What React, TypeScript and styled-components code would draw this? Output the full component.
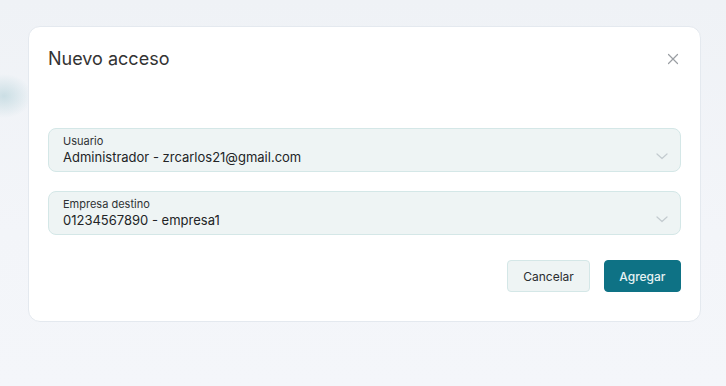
import { createGlobalStyle, styled } from "styled-components";

const GlobalStyle = createGlobalStyle`
  html, body {
    margin: 0;
    padding: 0;
  }
  body {
    background-color: #f1f4f8;
    font-family: "Inter", "Liberation Sans", sans-serif;
  }
`;

const Backdrop = styled.div`
  width: 726px;
  height: 386px;
  box-sizing: border-box;
  padding: 26px 25px 0 28px;
  background:
    radial-gradient(ellipse 28px 22px at 4px 96px, rgba(190, 215, 222, 0.75), rgba(190, 215, 222, 0) 100%),
    linear-gradient(180deg, #eff2f6 0%, #f3f5f9 60%, #f4f6fa 100%);
`;

const Modal = styled.div`
  width: 673px;
  height: 296px;
  box-sizing: border-box;
  padding: 20px 19px 0 19px;
  background-color: #ffffff;
  border: 1px solid #e4e9ef;
  border-radius: 12px;
  display: flex;
  flex-direction: column;
`;

const Header = styled.div`
  display: flex;
  align-items: center;
  justify-content: space-between;
  margin-bottom: 58px;
`;

const Title = styled.h2`
  margin: 0;
  font-size: 18px;
  line-height: 23px;
  font-weight: 400;
  color: #333333;
`;

const CloseButton = styled.button`
  display: flex;
  align-items: center;
  justify-content: center;
  width: 16px;
  height: 16px;
  padding: 0;
  border: none;
  background: transparent;
  cursor: pointer;
`;

const Fields = styled.div`
  display: flex;
  flex-direction: column;
  gap: 19px;
`;

const Field = styled.div`
  position: relative;
  height: 44px;
  box-sizing: border-box;
  padding: 5px 14px;
  background-color: #eef4f4;
  border: 1px solid #d4e7e7;
  border-radius: 8px;
`;

const Label = styled.div`
  font-size: 11px;
  line-height: 14px;
  color: #2f3235;
`;

const Value = styled.div`
  font-size: 13px;
  line-height: 18px;
  color: #222426;
`;

const Chevron = styled.svg`
  position: absolute;
  right: 12px;
  top: 24px;
`;

const Footer = styled.div`
  display: flex;
  justify-content: flex-end;
  gap: 14px;
  margin-top: 25px;
`;

const Button = styled.button<{ $primary?: boolean }>`
  height: 32px;
  box-sizing: border-box;
  padding: 0 ${(p) => (p.$primary ? "14.5px" : "15px")};
  font-family: "Inter", "Liberation Sans", sans-serif;
  font-size: 12px;
  font-weight: ${(p) => (p.$primary ? 500 : 400)};
  border-radius: 4px;
  cursor: pointer;
  color: ${(p) => (p.$primary ? "#e6f2f4" : "#2a2d30")};
  background-color: ${(p) => (p.$primary ? "#0e7285" : "#eef4f4")};
  border: 1px solid ${(p) => (p.$primary ? "#0e7285" : "#d4e7e7")};
`;

const fields = [
  { label: "Usuario", value: "Administrador - zrcarlos21@gmail.com" },
  { label: "Empresa destino", value: "01234567890 - empresa1" },
];

export default function App() {
  return (
    <>
      <GlobalStyle />
      <Backdrop>
        <Modal>
          <Header>
            <Title>Nuevo acceso</Title>
            <CloseButton aria-label="Cerrar">
              <svg width="12" height="12" viewBox="0 0 12 12">
                <path d="M1.5 1.5 L10.5 10.5 M10.5 1.5 L1.5 10.5" stroke="#9a9ea3" strokeWidth="1.2" strokeLinecap="round" />
              </svg>
            </CloseButton>
          </Header>
          <Fields>
            {fields.map((f) => (
              <Field key={f.label}>
                <Label>{f.label}</Label>
                <Value>{f.value}</Value>
                <Chevron width="12" height="7" viewBox="0 0 12 7">
                  <path d="M1 1 L6 5.5 L11 1" fill="none" stroke="#c3cbcf" strokeWidth="1.2" strokeLinecap="round" strokeLinejoin="round" />
                </Chevron>
              </Field>
            ))}
          </Fields>
          <Footer>
            <Button>Cancelar</Button>
            <Button $primary>Agregar</Button>
          </Footer>
        </Modal>
      </Backdrop>
    </>
  );
}
